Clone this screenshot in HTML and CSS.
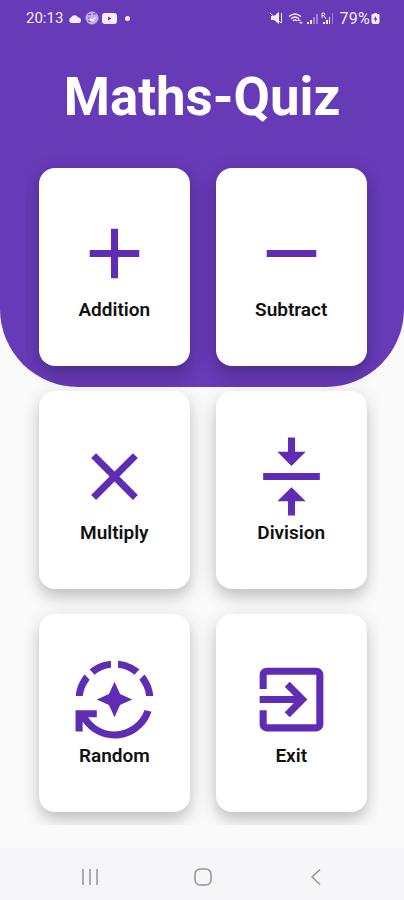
FILE: index.html
```html
<!DOCTYPE html>
<html lang="en">
<head>
    <meta charset="UTF-8">
    <meta name="viewport" content="width=device-width, initial-scale=1.0">
    <title>Maths-Quiz</title>
    <link rel="stylesheet" href="styles.css">
</head>
<body>

    <div class="screen">
        <!-- Status bar -->
        <div class="status-bar">
            <div class="status-left">
                <span class="clock">20:13</span>
                <svg class="cloud" width="14" height="9" viewBox="0 0 14 9"><path d="M3 9a3 3 0 0 1 0-5.5a4 4 0 0 1 7.2 0A2.8 2.8 0 0 1 11 9z"/></svg>
                <svg class="ball" width="14" height="14" viewBox="0 0 14 14"><circle cx="7" cy="7" r="6.5" opacity="0.65"/><path class="dark" d="M3 4q2-2 3 0M8 3h3M3 10q4 2 7-2M3 7h2"/><path d="M4 7l3 1 4-2-2 4-3 1z"/></svg>
                <svg class="video" width="15" height="11" viewBox="0 0 15 11"><rect width="15" height="11" rx="3"/><path class="dark-fill" d="M6 3.5v4l3.5-2z"/></svg>
                <span class="dot"></span>
            </div>
            <div class="status-right">
                <svg width="13" height="12" viewBox="0 0 13 12"><path d="M1 4h3l5-4v12L4 8H1z"/><path class="line" d="M0 1l11 10M11.5 1v10"/></svg>
                <svg class="wifi" width="16" height="12" viewBox="0 0 16 12"><path class="line thick" d="M1 4.5q6-5 12 0M3 6.7q4-3.5 8 0M5 8.8q2-1.8 4 0"/><path d="M9 9l2-2 2 2zM11 10h4l-2 2z"/></svg>
                <svg class="signal" width="11" height="11" viewBox="0 0 11 11"><path d="M0 9h2v2H0zM3 7h2v4H3z"/><path opacity="0.4" d="M6 4h2v7H6zM9 1h2v10H9z"/></svg>
                <svg class="signal" width="13" height="13" viewBox="0 0 13 13"><path class="line" d="M1 6V1h2q2 1 0 2.5H1M3 4l2 3"/><path d="M2 10h2v2H2zM5 8h2v4H5zM8 5h1v7H8z"/><path opacity="0.4" d="M11 1h1v11h-1z"/></svg>
                <span class="battery-text">79%</span>
                <svg class="battery" width="9" height="11" viewBox="0 0 8 11"><path d="M2.5 0h3v1H7q1 0 1 1v7q0 2-2 2H2Q0 11 0 9V2q0-1 1-1h1.5z"/><path class="dark-fill" d="M4.5 3L2 6.5h1.5V9L6 5.5H4.5z"/></svg>
            </div>
        </div>

        <h1>Maths-Quiz</h1>

        <!-- Quiz menu -->
        <div class="menu">
            <div class="card">
                <svg class="icon" viewBox="0 0 24 24"><path d="M19 13h-6v6h-2v-6H5v-2h6V5h2v6h6v2z"/></svg>
                <span class="label">Addition</span>
            </div>
            <div class="card">
                <svg class="icon" viewBox="0 0 24 24"><path d="M19 13H5v-2h14v2z"/></svg>
                <span class="label">Subtract</span>
            </div>
            <div class="card">
                <svg class="icon" viewBox="0 0 24 24"><path d="M18.6 6.8L17.2 5.4 12 10.6 6.8 5.4 5.4 6.8 10.6 12 5.4 17.2 6.8 18.6 12 13.4 17.2 18.6 18.6 17.2 13.4 12z"/></svg>
                <span class="label">Multiply</span>
            </div>
            <div class="card">
                <svg class="icon" viewBox="0 0 24 24"><path d="M8 19h3v4h2v-4h3l-4-4-4 4zm8-14h-3V1h-2v4H8l4 4 4-4zM4 11v2h16v-2H4z"/></svg>
                <span class="label">Division</span>
            </div>
            <div class="card">
                <svg class="icon" viewBox="0 0 24 24"><path d="M19.03 3.56c-1.67-1.39-3.74-2.3-6.03-2.51v2.01c1.73.19 3.31.88 4.61 1.92l1.42-1.42zM11 3.06V1.05C8.71 1.25 6.64 2.17 4.97 3.56l1.42 1.42C7.69 3.94 9.27 3.25 11 3.06zM4.98 6.39L3.56 4.97C2.17 6.64 1.26 8.71 1.05 11h2.01c.19-1.73.88-3.31 1.92-4.61zM20.94 11h2.01c-.21-2.29-1.12-4.36-2.51-6.03l-1.42 1.42c1.04 1.3 1.73 2.88 1.92 4.61zM7 12l3.44 1.56L12 17l1.56-3.44L17 12l-3.44-1.56L12 7l-1.56 3.44L7 12zM12 21c-3.11 0-5.85-1.59-7.46-4H7v-2H1v6h2v-2.7c1.99 2.84 5.27 4.7 9 4.7 4.87 0 9-3.17 10.44-7.56l-1.96-.45C19.25 18.48 15.92 21 12 21z"/></svg>
                <span class="label">Random</span>
            </div>
            <div class="card">
                <svg class="icon" viewBox="0 0 24 24"><path d="M10.09 15.59L11.5 17l5-5-5-5-1.41 1.41L12.67 11H3v2h9.67l-2.58 2.59zM19 3H5c-1.11 0-2 .9-2 2v4h2V5h14v14H5v-4H3v4c0 1.1.89 2 2 2h14c1.1 0 2-.9 2-2V5c0-1.1-.9-2-2-2z"/></svg>
                <span class="label">Exit</span>
            </div>
        </div>

        <!-- Navigation bar -->
        <div class="nav-bar">
            <svg width="16" height="16" viewBox="0 0 16 16"><path d="M1 0v16M8 0v16M15 0v16"/></svg>
            <svg class="home" width="18" height="18" viewBox="0 0 18 18"><rect x="1" y="1" width="16" height="16" rx="5"/></svg>
            <svg width="10" height="16" viewBox="0 0 10 16"><path d="M9 .5L1 8l8 7.5"/></svg>
        </div>
    </div>

</body>
</html>
```
FILE: styles.css
```css
/* General styles */
body {
    margin: 0;
    background-color: #fafafa;
    font-family: Roboto, sans-serif;
}

/* The purple header is drawn behind the title and the first row */
.screen {
    display: flex;
    flex-direction: column;
    height: 900px;
    position: relative;
    overflow: hidden;
    z-index: 0;
}

.screen::before {
    content: "";
    position: absolute;
    z-index: -1;
    top: 0;
    left: 0;
    right: 0;
    height: 387px;
    background-color: #673ab7;
    border-radius: 0 0 78px 78px;
}

/* Status bar */
.status-bar {
    display: flex;
    justify-content: space-between;
    box-sizing: border-box;
    height: 36px;
    padding: 0 24px 0 26px;
    color: #f3edff;
    font-size: 15px;
}

.status-left,
.status-right {
    display: flex;
    align-items: center;
}

.status-bar svg {
    fill: #f3edff;
}

.status-bar .line {
    fill: none;
    stroke: #f3edff;
}

.status-bar .thick {
    stroke-width: 1.4;
}

.status-bar .dark {
    fill: none;
    stroke: #673ab7;
}

.status-bar .dark-fill {
    fill: #673ab7;
}

.clock {
    width: 37px;
}

.cloud {
    margin-left: 5px;
}

.ball,
.video {
    margin-left: 3px;
}

.dot {
    width: 5px;
    height: 5px;
    margin-left: 8px;
    border-radius: 50%;
    background-color: #f3edff;
}

.wifi {
    margin-left: 5px;
}

.signal {
    margin-left: 3px;
}

.battery-text {
    margin-left: 5px;
    font-size: 16px;
    letter-spacing: 0.3px;
}

.battery {
    margin-left: 1px;
}

h1 {
    margin: 0;
    height: 119px;
    line-height: 123px;
    text-align: center;
    color: #fff;
    font-size: 52.8px;
    font-weight: 700;
}

/* Menu cards */
.menu {
    display: grid;
    grid-template-columns: 1fr 1fr;
    grid-template-rows: repeat(3, 1fr);
    gap: 25.5px;
    box-sizing: border-box;
    height: 670px;
    margin: 0 24.5px 0 26px;
    padding: 12.6px;
    overflow: hidden;
}

.card {
    display: flex;
    flex-direction: column;
    align-items: center;
    padding-top: 43px;
    border-radius: 16px;
    background-color: #fff;
    box-shadow: 0 8px 13px rgba(0, 0, 0, 0.17), 0 4px 24px rgba(0, 0, 0, 0.09);
}

.icon {
    width: 85px;
    height: 85px;
    fill: #5e2db3;
}

.label {
    margin-top: 3px;
    line-height: 22px;
    color: #111;
    font-size: 19px;
    font-weight: 600;
}

/* Navigation bar */
.nav-bar {
    display: flex;
    align-items: center;
    justify-content: space-between;
    box-sizing: border-box;
    height: 52px;
    margin-top: auto;
    padding: 5px 83px 0 82px;
    background-color: #f6f6f9;
}

.nav-bar svg {
    fill: none;
    stroke: #949496;
    stroke-width: 1.5;
}

.nav-bar .home {
    margin-right: 4px;
}
```
